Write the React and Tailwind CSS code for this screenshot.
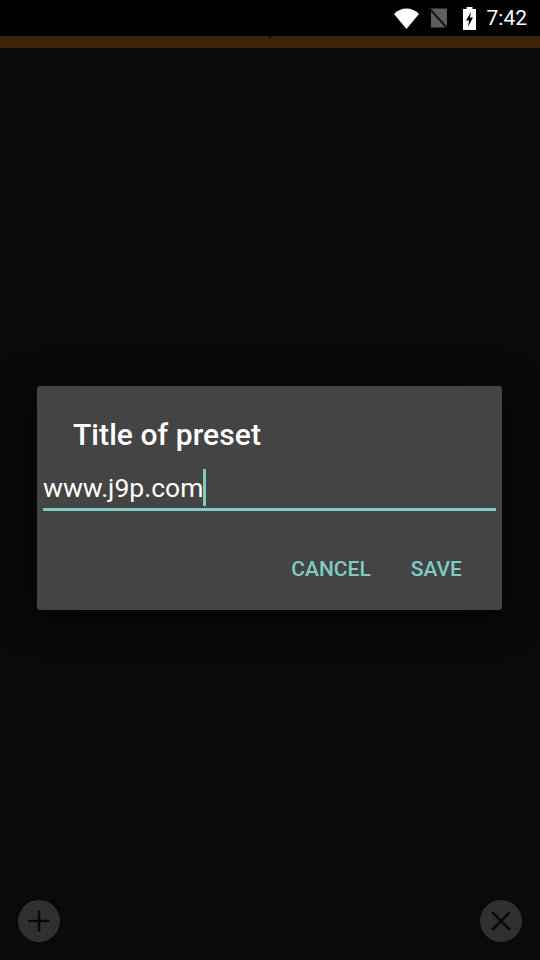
const StatusBar = () => (
    <div className="h-[36px] bg-black flex items-center justify-end text-white">
        {/* wifi */}
        <svg width="25" height="21" viewBox="0 0 25 21">
            <path d="M0 6 C3.5 2.4 7.8 0.5 12.5 0.5 C17.2 0.5 21.5 2.4 25 6 L12.5 21 Z" fill="#fff" />
        </svg>
        {/* no sim */}
        <svg width="19" height="20" viewBox="0 0 19 20" className="ml-[10px]">
            <path d="M2 0.5 H18 V19.5 H2 Z" fill="#5e5e5e" />
            <path d="M0 0 L18 20" stroke="#000" strokeWidth="2" />
            <path d="M0 0 L17.5 19.5" stroke="#3a3a3a" strokeWidth="0.8" />
        </svg>
        {/* battery charging */}
        <svg width="13" height="23" viewBox="0 0 13 23" className="ml-[15px]">
            <path d="M3.5 0 H9.5 V2 H13 V23 H0 V2 H3.5 Z" fill="#fff" />
            <path d="M8 5 L3 13.5 H6 L5 20 L10 10.5 H7 Z" fill="#000" />
        </svg>
        <span className="ml-[11px] mr-[13px] font-['Roboto',sans-serif] text-[21px] leading-none">7:42</span>
    </div>
);

const RoundButton = ({ children }) => (
    <button className="w-[42px] h-[42px] rounded-full bg-[#303030] flex items-center justify-center">
        {children}
    </button>
);

export default function App() {
    return (
        <div className="w-[540px] h-[960px] bg-[#0a0a0a] flex flex-col overflow-hidden font-['Roboto',sans-serif]">
            <StatusBar />
            <div className="relative h-[12px] bg-[#3b2408]">
                <div className="absolute left-[269px] top-0 w-[2px] h-[2px] bg-[#0a0a0a]"></div>
            </div>

            <div className="flex-1 flex flex-col">
                <div className="mt-[338px] mx-[37px] w-[465px] h-[224px] bg-[#444444] rounded-[3px] shadow-[0_6px_40px_rgba(0,0,0,0.85)] flex flex-col">
                    <h2 className="mt-[30px] ml-[36px] text-[30px] leading-[38px] font-medium text-white tracking-[0.07px]">Title of preset</h2>
                    <div className="mt-[15px] mx-[6px] h-[42px] border-b-[3px] border-[#80cbc4] flex items-start">
                        <span className="text-[26.5px] leading-[38px] text-white">www.j9p.com</span>
                        <span className="w-[3px] h-[37px] bg-[#80cbc4]"></span>
                    </div>
                    <div className="mt-[43px] flex justify-end gap-[40px] pr-[40px]">
                        <button className="text-[21px] leading-[30px] font-medium text-[#80cbc4]">CANCEL</button>
                        <button className="text-[21px] leading-[30px] font-medium text-[#80cbc4]">SAVE</button>
                    </div>
                </div>

                <div className="mt-auto mb-[18px] px-[18px] flex justify-between">
                    <RoundButton>
                        <svg width="26" height="26" viewBox="0 0 26 26">
                            <path d="M13 3.5 V22.5 M3.5 13 H22.5" stroke="#0a0a0a" strokeWidth="2.6" strokeLinecap="round" />
                        </svg>
                    </RoundButton>
                    <RoundButton>
                        <svg width="26" height="26" viewBox="0 0 26 26">
                            <path d="M5 5 L21 21 M21 5 L5 21" stroke="#0a0a0a" strokeWidth="2.6" strokeLinecap="round" />
                        </svg>
                    </RoundButton>
                </div>
            </div>
        </div>
    );
}
